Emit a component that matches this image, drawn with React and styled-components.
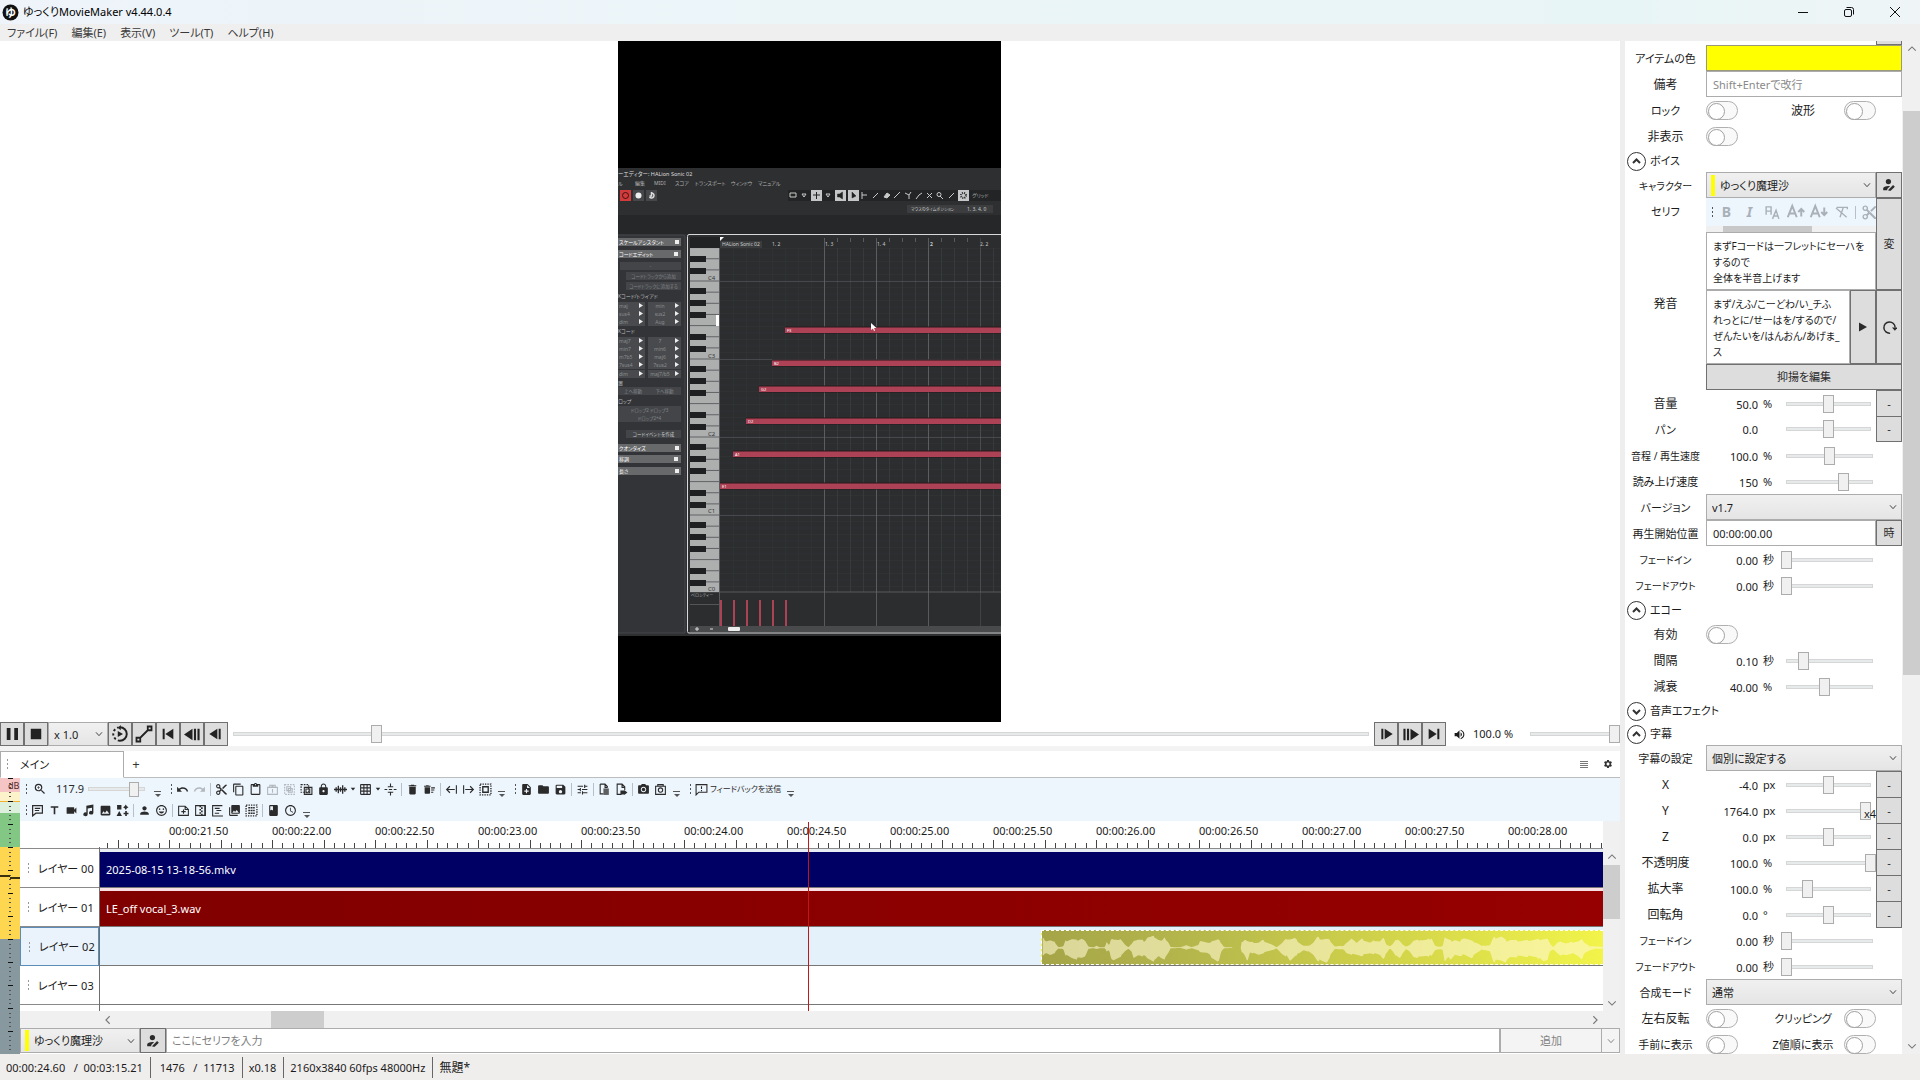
import React, { useState, useId } from 'react';
import styled, { createGlobalStyle } from 'styled-components';
import {
  MdZoomIn, MdUndo, MdRedo, MdContentCut, MdContentCopy, MdContentPaste, MdLock, MdGridOn,
  MdDelete, MdDeleteSweep, MdNoteAdd, MdFolder, MdSave, MdTune, MdPhotoCamera, MdTitle,
  MdVideocam, MdImage, MdPerson, MdInsertEmoticon, MdPhotoLibrary, MdBook, MdAccessTime,
  MdVolumeUp, MdSettings, MdSelectAll,
} from 'react-icons/md';

const FONT = '"Noto Sans", "Noto Sans CJK JP", sans-serif';

const GlobalStyle = createGlobalStyle`
  * { box-sizing: border-box; }
  body {
    margin: 0;
    font-family: ${FONT};
    font-size: 11px;
    line-height: 16px;
    font-feature-settings: "palt";
    color: #1b1b1b;
    background: #f0eeed;
  }
  button, input, select, textarea {
    font-family: inherit;
    font-size: inherit;
    line-height: inherit;
    font-feature-settings: inherit;
    color: inherit;
    margin: 0;
  }
`;

/* ---------- icons ---------- */

const Glyph = ({ size = 13, children }) => (
  <svg width={size} height={size} viewBox="0 0 24 24" fill="currentColor" aria-hidden="true">
    {children}
  </svg>
);

const stroke = { fill: 'none', stroke: 'currentColor', strokeWidth: 2 };

const PauseIcon = () => <Glyph size={18}><path d="M5 4h5v16H5zM15 4h5v16h-5z" /></Glyph>;
const StopIcon = () => <Glyph size={18}><path d="M5 5h14v14H5z" /></Glyph>;
const LoopIcon = () => (
  <Glyph size={18}>
    <path d="M12 3a9 9 0 0 1 0 18" {...stroke} strokeWidth="2.6" />
    <path d="M12 21a9 9 0 0 1-9-9 9 9 0 0 1 7-8.8" {...stroke} strokeWidth="2.6" strokeDasharray="3 3" />
    <path d="M9 8l7 4-7 4zM13 0v7L9 3.500z" />
  </Glyph>
);
const PathIcon = () => (
  <Glyph size={18}>
    <path d="M2 17h5v5H2zM17 2h5v5h-5zM7 17L17 7" {...stroke} strokeWidth="2.4" />
  </Glyph>
);
const FirstIcon = () => <Glyph size={16}><path d="M4 4h3v16H4zM20 4v16L8 12z" /></Glyph>;
const BackManyIcon = () => <Glyph size={17}><path d="M12 4v16L0 12zM14 4h3v16h-3zM19 4h3v16h-3z" /></Glyph>;
const BackIcon = () => <Glyph size={16}><path d="M14 4v16L2 12zM16 4h3v16h-3z" /></Glyph>;
const NextIcon = () => <Glyph size={16}><path d="M10 4v16l12-8zM5 4h3v16H5z" /></Glyph>;
const NextManyIcon = () => <Glyph size={17}><path d="M12 4v16l12-8zM7 4h3v16H7zM2 4h3v16H2z" /></Glyph>;
const LastIcon = () => <Glyph size={16}><path d="M17 4h3v16h-3zM4 4v16l12-8z" /></Glyph>;
const PersonEdit = () => (
  <Glyph size={14}>
    <circle cx="11" cy="6" r="4.500" />
    <path d="M2 21v-3c0-3 4-4.500 9-4.500 1 0 2 .1 3 .3L9 19v2z" />
    <path d="M11 20l8-8 3 3-7 7h-4z" />
  </Glyph>
);
const ChevronDown = () => <Glyph size={8}><path d="M3 7l9 10 9-10" {...stroke} strokeWidth="3" /></Glyph>;
const Arrow = ({ turn = 0 }) => (
  <Glyph size={10}>
    <path d="M3 16l9-9 9 9" {...stroke} strokeWidth="2.600" transform={`rotate(${turn} 12 12)`} />
  </Glyph>
);
const GroupIcon = () => (
  <Glyph>
    <path d="M3 3h18v18H3z" {...stroke} strokeDasharray="3 2" />
    <path d="M7 7h7v7H7zM10 10h7v7h-7z" {...stroke} />
  </Glyph>
);
const UngroupIcon = () => (
  <Glyph>
    <path d="M2 3h14v14H2z" {...stroke} strokeDasharray="3 2" />
    <path d="M8 8h14v13H8zM11 11h7v7h-7z" {...stroke} />
  </Glyph>
);
const PasteAttr = () => <Glyph><path d="M3 8h18v13H3zM7 8V4h4v4M13 8V4h4v4M12 11v7" {...stroke} /></Glyph>;
const WaveIcon = () => <Glyph><path d="M0 12h24M4 8v8M8 5v14M12 8v8M16 4v16M20 8v8" {...stroke} strokeWidth="2.400" /></Glyph>;
const SplitIcon = () => <Glyph><path d="M1 12h5M18 12h5M9 12h6M7 7h10M7 17h10M12 1v5M12 18v5" {...stroke} /></Glyph>;
const ToLeft = () => <Glyph><path d="M21 4v16M18 12H3M9 6l-6 6 6 6" {...stroke} /></Glyph>;
const ToRight = () => <Glyph><path d="M3 4v16M6 12h15M15 6l6 6-6 6" {...stroke} /></Glyph>;
const BoxDots = () => (
  <Glyph>
    <path d="M2 2h20v20H2z" {...stroke} strokeWidth="2.500" strokeDasharray="2.500 2" />
    <path d="M7 7h10v10H7z" {...stroke} strokeWidth="2.500" />
  </Glyph>
);
const GroupDots = () => (
  <Glyph>
    <path d="M2 2h20v20H2z" {...stroke} strokeWidth="2.500" strokeDasharray="2.500 2" />
    <path d="M6 7h12M6 12h12M6 17h12" {...stroke} strokeWidth="3" strokeDasharray="3.500 1" />
  </Glyph>
);
const SerifIcon = () => <Glyph><path d="M3 3h18v14H9l-6 5z M7 8h10M7 12h8" {...stroke} strokeWidth="2.200" /></Glyph>;
const MusicIcon = () => <Glyph><path d="M8 3l13-2v15a4 3.500 0 1 1-2.500-3.200V7l-8 1.200V19A4 3.500 0 1 1 8 15.800z" /></Glyph>;
const ShapesIcon = () => <Glyph><path d="M2 2h8v8H2zM6 13l5 9H1zM14 16h3v-3h3v3h3v3h-3v3h-3v-3h-3zM18 1l2 3 3 2-3 2-2 3-2-3-3-2 3-2z" /></Glyph>;
const EffectIcon = () => <Glyph><path d="M3 4h12l6 6v11H3zM15 4v6h6M12 10v8M8 14h8" {...stroke} /></Glyph>;
const GradIcon = () => (
  <Glyph>
    <path d="M3 3h18v18H3z" {...stroke} />
    <path d="M10 3h3v3h-3zM13 6h3v3h-3zM10 9h3v3h-3zM13 12h3v3h-3zM10 15h3v3h-3zM13 18h3v3h-3zM16 3h5v18h-2V3z" />
  </Glyph>
);
const SceneIcon = () => <Glyph><path d="M3 2v20h19M3 3h18M7 8h9M10 12h9M7 17h8" {...stroke} /></Glyph>;
const FileList = () => <Glyph><path d="M4 2h9l5 5M4 2v18h6M13 2v6h5" {...stroke} /><path d="M10 10h10v12H10z" opacity=".75" /></Glyph>;
const FileOut = () => <Glyph><path d="M12 21H4V2h9l5 5v6M13 2v6h5" {...stroke} /><path d="M10 14h8v7h-8zM17 13l6 4.500-6 4.500z" /></Glyph>;
const CamFile = () => (
  <Glyph>
    <path d="M3 6h18v15H3zM7 6V3h10v3" {...stroke} />
    <circle cx="12" cy="13" r="4" {...stroke} />
  </Glyph>
);
const FeedbackIcon = () => <Glyph><path d="M2 3h20v14H7l-5 5zM12 6v5M12 13v2" {...stroke} /></Glyph>;
const ClearFormat = () => <Glyph size={16}><path d="M4 5h16v3M14 5L9 20M3 6l16 14" {...stroke} /></Glyph>;

/* ---------- window ---------- */

const Window = styled.div`
  display: flex;
  flex-direction: column;
  height: 100vh;
  overflow: hidden;
`;

const TitleBar = styled.header`
  display: flex;
  align-items: center;
  flex: none;
  height: 24px;
  padding-right: 2px;
  padding-left: 2px;
  background: linear-gradient(90deg, #eef4fa, #eaf5f7 60%, #e8f5f6 85%, #eff5f6);
`;

const AppTitle = styled.h1`
  flex: 1;
  margin: 0 0 0 4px;
  font-size: 11px;
  font-weight: 400;
  color: #000;
`;

const WindowButton = styled.button`
  display: grid;
  place-items: center;
  width: 46px;
  height: 20px;
  padding: 0;
  border: 0;
  background: none;
`;

const MenuBar = styled.nav`
  display: flex;
  flex: none;
  gap: 14px;
  height: 17px;
  padding-left: 7px;
  background: #efefef;
`;

const MenuItem = styled.button`
  padding: 0;
  border: 0;
  background: none;
  color: #3a3a3a;
`;

const Workspace = styled.div`
  display: flex;
  flex: 1;
  min-height: 0;
`;

const Main = styled.main`
  display: flex;
  flex-direction: column;
  flex: 1;
  min-width: 0;
  background: #fff;
`;

const Preview = styled.section`
  display: flex;
  flex: 1;
  justify-content: center;
  min-height: 0;
  padding-right: 1px;

  svg { height: 100%; }
`;

const Transport = styled.div`
  display: flex;
  align-items: center;
  flex: none;
  height: 24px;
`;

const TransportButton = styled.button`
  display: grid;
  place-items: center;
  width: 24px;
  height: 24px;
  padding: 0;
  border: 1px solid #707070;
  background: #dddddd;
  color: #222;
`;

const VolumeText = styled.span`
  width: 53px;
  padding-left: 1px;
`;

const Speaker = styled.span`
  display: grid;
  place-items: center;
  width: 26px;
`;

const Range = styled.input.attrs({ type: 'range' })`
  appearance: none;
  flex: ${(p) => (p.$grow ? 1 : 'none')};
  width: ${(p) => (p.$grow ? 'auto' : `${p.$width}px`)};
  min-width: 0;
  height: 18px;
  background:
    linear-gradient(#e7eaea, #e7eaea) center / calc(100% - 12px) 2px no-repeat,
    linear-gradient(#d6d6d6, #d6d6d6) center / calc(100% - 10px) 4px no-repeat;

  &::-webkit-slider-thumb {
    appearance: none;
    width: ${(p) => (p.$slim ? 10 : 11)}px;
    height: ${(p) => (p.$slim ? 15 : 18)}px;
    border: 1px solid #acacac;
    background: #f0f0f0;
  }
`;

const HSplit = styled.div`
  flex: none;
  height: 5px;
  background: #f3f3f3;
`;

const VSplit = styled.div`
  flex: none;
  width: 5px;
  background: #eeeeee;
`;

/* ---------- select ---------- */

const SelectBox = styled.div`
  display: grid;
  align-items: center;
  width: ${(p) => (p.$width ? `${p.$width}px` : 'auto')};
  height: 100%;

  > * { grid-area: 1 / 1; }
  > svg { justify-self: end; margin-right: 5px; pointer-events: none; color: #444; }
`;

const NativeSelect = styled.select`
  appearance: none;
  width: 100%;
  height: 100%;
  padding: 1px 16px 0 ${(p) => (p.$marked ? 13 : 5)}px;
  border: 1px solid #acacac;
  border-radius: 0;
  background: linear-gradient(#f0f0f0, #e5e5e5);
`;

const Marker = styled.span`
  width: 4px;
  height: 21px;
  margin-left: 5px;
  background: #ffff00;
  pointer-events: none;
`;

function Select({ value, width, marked, id, label }) {
  return (
    <SelectBox $width={width}>
      <NativeSelect id={id} aria-label={label} $marked={marked} defaultValue={value}>
        <option>{value}</option>
      </NativeSelect>
      {marked && <Marker />}
      <ChevronDown />
    </SelectBox>
  );
}

/* ---------- timeline ---------- */

const TabBar = styled.div`
  display: flex;
  align-items: stretch;
  flex: none;
  height: 27px;
  border-bottom: 1px solid #bdbdbd;
`;

const Tab = styled.button`
  display: flex;
  align-items: center;
  gap: 10px;
  width: 124px;
  height: 27px;
  padding: 0 0 0 4px;
  border: 1px solid #acacac;
  border-bottom-color: #fff;
  background: #fff;
  font-size: 11px;
`;

const TabIcon = styled.button`
  display: grid;
  place-items: center;
  width: 24px;
  padding: 0;
  border: 0;
  background: none;
  font-size: 13px;
  color: #333;
`;

const Spacer = styled.div`
  flex: 1;
`;

const TimelineArea = styled.section`
  display: flex;
  flex: none;
`;

const TimelinePane = styled.div`
  flex: 1;
  min-width: 0;
`;

const Toolbars = styled.div`
  height: 43px;
  background: #edf5fd;
`;

const Toolbar = styled.div`
  display: flex;
  align-items: center;
  height: ${(p) => p.$height || 22}px;
  padding-left: 4px;
  color: #2b2b2b;
`;

const Tool = styled.button`
  display: grid;
  place-items: center;
  flex: none;
  width: ${(p) => p.$width || 17}px;
  height: 18px;
  padding: 0;
  border: 0;
  background: none;
  opacity: ${(p) => (p.disabled ? 0.3 : 1)};
`;

const FeedbackButton = styled.button`
  display: flex;
  align-items: center;
  gap: 2px;
  padding: 0 2px;
  border: 0;
  background: none;
  font-size: 8px;
`;

const Grip = styled.span`
  flex: none;
  width: 5px;
  height: 11px;
  background:
    linear-gradient(${(p) => (p.$faint ? '#999, #999' : '#555, #555')}) 2px 0 / 1px 2px no-repeat,
    linear-gradient(${(p) => (p.$faint ? '#999, #999' : '#555, #555')}) 2px 4px / 1px 2px no-repeat,
    linear-gradient(${(p) => (p.$faint ? '#999, #999' : '#555, #555')}) 2px 8px / 1px 2px no-repeat;
`;

const Divider = styled.span`
  flex: none;
  width: 1px;
  height: 13px;
  margin: 0 2px;
  background: #b9bfc6;
`;

const Overflow = styled.span`
  align-self: flex-end;
  flex: none;
  width: 7px;
  height: 7px;
  margin: 0 8px 2px 4px;
  border-top: 1px solid #555;

  &::after {
    content: '';
    display: block;
    margin: 2px 0 0 1px;
    width: 0;
    border: 3px solid transparent;
    border-top-color: #555;
    border-bottom: 0;
  }
`;

const ZoomValue = styled.span`
  width: 32px;
  padding-left: 5px;
`;

const Timeline = styled.div`
  display: grid;
  grid-template-columns: 80px 1fr 17px;
`;

const Heads = styled.div`
  padding-top: 27px;
  border-right: 1px solid #6f6f6f;
  border-image: linear-gradient(transparent 27px, #6f6f6f 27px) 1;
`;

const LayerHead = styled.div`
  display: flex;
  align-items: center;
  gap: 7px;
  height: 39px;
  padding-top: 1px;
  padding-left: 6px;
  border: ${(p) => (p.$active ? '1px solid #5b8db8' : '0')};
  border-bottom: 1px solid ${(p) => (p.$active ? '#5b8db8' : '#8a8a8a')};
  background: ${(p) => (p.$active ? '#eaf3fb' : '#fff')};

  &:first-child { border-top: 1px solid #8a8a8a; height: 40px; }
`;

const Tracks = styled.div`
  position: relative;
  min-width: 0;
  overflow: hidden;
`;

const Ruler = styled.div`
  height: 28px;
  border-bottom: 1px solid #8a8a8a;
`;

const RulerLabels = styled.div`
  display: flex;
  height: 19px;
  padding: 2px 0 0 69px;
`;

const RulerLabel = styled.span`
  flex: none;
  width: 103px;
`;

const Ticks = styled.svg`
  display: block;
  width: 100%;
  height: 8px;
`;

const Track = styled.div`
  display: flex;
  height: 39px;
  padding-top: 3px;
  border-bottom: 1px solid #777;
  background: ${(p) => (p.$active ? '#e4f1fb' : p.$tint || '#fff')};
`;

const TrackEnd = styled.div`
  height: 6px;
`;

const Clip = styled.div`
  display: flex;
  align-items: center;
  flex: 1;
  min-width: 0;
  padding-left: 6px;
  color: #fff;
  background: ${(p) => p.$fill};
`;

const VoiceClip = styled.div`
  flex: 1;
  min-width: 0;
  margin-left: 941px;
  border: 1px dashed #fff;
  border-right: 0;
  background: linear-gradient(90deg, #a5a548, #b7b94c 30%, #d0d24a 60%, #f2f44a);
  overflow: hidden;

  svg { display: block; }
`;

const Playhead = styled.div`
  position: absolute;
  top: 1px;
  bottom: 0;
  left: 708px;
  width: 1px;
  background: #c01818;
`;

const VScroll = styled.div`
  display: flex;
  flex-direction: column;
  align-items: center;
  width: 17px;
  padding: ${(p) => p.$pad || '3px 0'};
  background: #f0f0f0;
  color: #777;
`;

const VThumb = styled.div`
  width: 17px;
  height: ${(p) => p.$size};
  margin-top: ${(p) => p.$top}px;
  background: #cdcdcd;
`;

const HScroll = styled.div`
  display: flex;
  align-items: center;
  height: 17px;
  padding: 0 20px 0 83px;
  background: #f0f0f0;
  color: #777;
`;

const HThumb = styled.div`
  width: 53px;
  height: 17px;
  margin-left: 158px;
  background: #cdcdcd;
`;

const SerifBar = styled.form`
  display: flex;
  height: 25px;
`;

const SerifInput = styled.input`
  flex: 1;
  min-width: 0;
  padding: 1px 5px 0;
  border: 1px solid #acacac;
  background: #fff;

  &::placeholder { color: #808080; }
`;

const AddButton = styled.button`
  width: ${(p) => p.$width}px;
  padding: 0;
  border: 1px solid #acacac;
  border-left-width: ${(p) => (p.$joined ? 0 : 1)}px;
  background: #f4f4f4;
  color: #838383;
`;

const StatusBar = styled.footer`
  display: flex;
  align-items: center;
  flex: none;
  height: 26px;
  padding-left: 6px;
`;

const StatusItem = styled.span`
  padding: 0 7px 0 6px;
  line-height: 21px;
  white-space: pre;
  border-right: ${(p) => (p.$last ? 0 : '1px solid #666')};
  font-size: ${(p) => (p.$last ? 12 : 11)}px;

  &:first-child { padding-left: 0; }
`;

/* ---------- property panel ---------- */

const Side = styled.aside`
  display: flex;
  flex: none;
  width: 295px;
  background: #f0f0f0;
`;

const Props = styled.div`
  flex: 1;
  margin-right: 1px;
  background: #fff;
  overflow: hidden;
`;

const CutButton = styled.div`
  width: 26px;
  height: 4px;
  margin-left: auto;
  border: 1px solid #707070;
  border-top: 0;
  background: #ddd;
`;

const PropRow = styled.div`
  display: grid;
  grid-template-columns: 81px 1fr;
  height: ${(p) => p.$height || 26}px;
`;

const PropLabel = styled.label`
  padding-top: 6px;
  text-align: center;
  white-space: nowrap;
  font-size: ${(p) => p.$size || 12}px;
`;

const PropBody = styled.div`
  display: flex;
  min-width: 0;
  align-items: ${(p) => (p.$center ? 'center' : 'stretch')};
`;

const Swatch = styled.button`
  flex: 1;
  border: 1px solid #9a9a7a;
  background: #ffff00;
`;

const TextField = styled.input`
  flex: 1;
  min-width: 0;
  padding: 1px 6px 0;
  border: 1px solid #acacac;
  background: #fff;

  &::placeholder { color: #8a8a8a; }
`;

const TextArea = styled.textarea`
  flex: 1;
  min-width: 0;
  width: 100%;
  padding: 5px 0 0 6px;
  border: 1px solid #acacac;
  border-radius: 0;
  background: #fff;
  font-size: 10px;
  line-height: 16px;
  white-space: pre;
  resize: none;
  overflow: hidden;
`;

const SideButton = styled.button`
  display: grid;
  place-items: center;
  flex: ${(p) => (p.$wide ? 1 : 'none')};
  width: 26px;
  padding: 0;
  border: 1px solid #707070;
  background: #dddddd;
  color: #2b2b2b;
`;

const Toggle = styled.input.attrs({ type: 'checkbox' })`
  appearance: none;
  display: block;
  flex: none;
  width: 32px;
  height: 19px;
  padding: 1px;
  border: 1px solid #b0b0b0;
  border-radius: 10px;
  background: #f9f9f9;

  &::before {
    content: '';
    display: block;
    width: 15px;
    height: 15px;
    border: 1px solid #a0a0a0;
    border-radius: 50%;
    background: #fff;
  }
  &:checked { background: #cfe4f7; padding-left: 14px; }
`;

const SecondLabel = styled.label`
  flex: 1;
  padding: 2px 6px 0 30px;
  text-align: center;
  font-size: ${(p) => p.$size || 12}px;
  white-space: nowrap;
`;

const EndPad = styled.span`
  width: 26px;
`;

const NumberField = styled.input`
  width: 52px;
  height: 100%;
  padding: 1px 0 0;
  border: 0;
  background: none;
  text-align: right;
`;

const Unit = styled.span`
  width: 23px;
  padding: 1px 0 0 5px;
  line-height: 26px;
`;

const Multiplier = styled.span`
  position: absolute;
  right: 0;
  bottom: 4px;
  line-height: 12px;
  pointer-events: none;
`;

const RangeBox = styled.div`
  display: flex;
  align-items: center;
  position: relative;
`;

const Expander = styled.button`
  display: flex;
  align-items: center;
  gap: 4px;
  width: 100%;
  height: 23px;
  padding: 1px 0 0 2px;
  border: 0;
  background: none;
`;

const ScriptColumn = styled.div`
  display: flex;
  flex-direction: column;
  flex: 1;
  min-width: 0;
`;

const FormatBar = styled.div`
  display: flex;
  align-items: center;
  flex: none;
  height: 28px;
  padding-left: 4px;
  background: #edf5fd;
  color: #a9b0b8;
  overflow: hidden;
`;

const FormatButton = styled.button`
  flex: none;
  width: 23px;
  height: 20px;
  padding: 0;
  border: 0;
  background: none;
  font-size: 14px;
  line-height: 18px;
  font-weight: 700;
  font-style: ${(p) => (p.$italic ? 'italic' : 'normal')};

  svg { display: block; margin: 0 auto; }
`;

const FormatScroll = styled.div`
  flex: none;
  height: 6px;
  padding-left: 17px;
  background: #f0f0f0;

  &::after {
    content: '';
    display: block;
    width: 89px;
    height: 6px;
    background: #c8c8c8;
  }
`;

function ExpanderRow({ title, open }) {
  return (
    <Expander aria-expanded={!!open}>
      <svg width="19" height="19" viewBox="0 0 19 19" fill="none" stroke="#333">
        <circle cx="9.5" cy="9.5" r="9" />
        <path d={open ? 'M6 11l3.500-3.500L13 11' : 'M6 8l3.500 3.500L13 8'} strokeWidth="2" />
      </svg>
      {title}
    </Expander>
  );
}

function ValueRow({ label, size, value, unit, pos, button, mult }) {
  const id = useId();
  const [current, setCurrent] = useState(pos);
  return (
    <PropRow>
      <PropLabel htmlFor={id} $size={size}>{label}</PropLabel>
      <PropBody>
        <NumberField id={id} defaultValue={value} />
        <Unit>{unit}</Unit>
        <RangeBox>
          <Range
            aria-label={label}
            $width={button ? 95 : 97}
            value={current}
            onChange={(e) => setCurrent(e.target.value)}
          />
          {mult && <Multiplier>{mult}</Multiplier>}
        </RangeBox>
        {button && <SideButton>-</SideButton>}
      </PropBody>
    </PropRow>
  );
}

function ToggleRow({ label, second, size, secondSize }) {
  const id = useId();
  return (
    <PropRow>
      <PropLabel htmlFor={id} $size={size}>{label}</PropLabel>
      <PropBody $center>
        <Toggle id={id} />
        {second && (
          <>
            <SecondLabel htmlFor={`${id}-b`} $size={secondSize}>{second}</SecondLabel>
            <Toggle id={`${id}-b`} />
            <EndPad />
          </>
        )}
      </PropBody>
    </PropRow>
  );
}

function SelectRow({ label, size, value }) {
  const id = useId();
  return (
    <PropRow>
      <PropLabel htmlFor={id} $size={size}>{label}</PropLabel>
      <Select id={id} value={value} />
    </PropRow>
  );
}

/* ---------- preview picture ---------- */

const OCTAVES = [162, 240, 318, 396, 474];
const BLACK_KEYS = [10, 22, 34, 56, 68];
const NOTES = [
  [167, 289, 'F3'], [154, 322, 'B2'], [141, 348, 'G2'], [128, 380, 'D2'], [115, 413, 'A1'], [102, 445, 'E1'],
];
const CHORDS = [
  [262, 'maj', 'min'], [270, 'sus4', 'sus2'], [278, 'dim', 'Aug'],
  [297, 'maj7', '7'], [305, 'min7', 'min6'], [313, 'm7b5', 'maj6'], [321, '7sus4', '7sus2'], [330, 'dim', 'maj7/b5'],
];
const HEADERS = [
  [197, 'スケールアシスタント'], [209, 'コードエディット'], [403, 'クオンタイズ'], [414, '移調'], [426, '長さ'],
];
const SMALL_BUTTONS = [
  [2, 221, 61, '-'], [8, 231, 55, 'コードトラックから追加'], [8, 241, 55, 'コードトラックに追加する'],
  [0, 346, 30, '上へ移動'], [30, 346, 33, '下へ移動'], [0, 365, 63, 'ドロップ2    ドロップ3'], [0, 373, 63, 'ドロップ2+4'],
  [8, 389, 55, 'コードイベントを作成'],
];

function EditorPicture() {
  return (
    <svg viewBox="0 0 383 681" fontSize="5" fontFamily={FONT} role="img" aria-label="プレビュー">
      <defs>
        <clipPath id="keys"><path d="M72 207h29v344H72z" /></clipPath>
      </defs>
      <rect width="383" height="681" fill="#000" />
      <rect y="127" width="383" height="468" fill="#2d2f31" />
      <rect y="174" width="383" height="19" fill="#252728" />
      <text x="0" y="135" fill="#ddd" fontSize="5.500">ーエディター: HALion Sonic 02</text>
      <g fill="#b4b4b4">
        {[[0, 'ル'], [17, '編集'], [36, 'MIDI'], [57, 'スコア'], [77, 'トランスポート'], [113, 'ウィンドウ'], [140, 'マニュアル']].map(
          ([x, t]) => <text key={t} x={x} y="144">{t}</text>
        )}
      </g>
      <rect x="2" y="149" width="11" height="11" fill="#d23b3b" />
      <circle cx="7.5" cy="154.500" r="3" fill="none" stroke="#401010" />
      <rect x="15" y="149" width="11" height="11" fill="#45474a" />
      <circle cx="20.5" cy="154.500" r="3" fill="#eee" />
      <rect x="28" y="149" width="11" height="11" fill="#45474a" />
      <path d="M33.500 152a2.500 2.500 0 1 1-2 4M33.500 151v4h-2" fill="none" stroke="#ddd" strokeWidth="1.500" />
      <rect x="170" y="149" width="213" height="11" fill="#222425" />
      {[193, 217, 230, 340].map((x) => <rect key={x} x={x} y="149" width="11" height="11" fill="#c4c6c8" />)}
      <g stroke="#222" fill="#222">
        <path d="M195 154h7M198.500 151v7" />
        <path d="M219.500 153h2l3-2v7l-3-2h-2zM234 151v6l4-2z" strokeWidth=".5" />
        <circle cx="345.500" cy="154.500" r="2.500" fill="none" strokeDasharray="1 1" strokeWidth="2" />
      </g>
      <g stroke="#c8c8c8" fill="none">
        <path d="M172 152h6v4h-6zM244 151v7M244 154h5M255 157l5-5M276 157l6-6M287 152l4 2 2-3M291 154v4M298 158l3-4 3-2M309 152l5 5M314 152l-5 5M331 157l5-5" />
        <path d="M266 156l3-4 3 2-3 3z" fill="#c8c8c8" />
        <circle cx="321" cy="153.500" r="2" />
        <path d="M322 155l3 3M184 153h4l-2 3zM208 153h4l-2 3z" />
      </g>
      <text x="354" y="156" fill="#aaa">グリッド</text>
      <rect x="289" y="164" width="86" height="8" fill="#3b3d3f" />
      <text x="293" y="170" fill="#ccc" fontSize="4">マウスのタイムポジション</text>
      <text x="349" y="170" fill="#ccc">1. 3. 4.  0</text>

      <path d="M0 194h65q2 0 2 2v396H0" fill="#323438" stroke="#45474a" />
      {HEADERS.map(([y, t], i) => (
        <g key={t}>
          <rect x="0" y={y} width="63" height="8" fill="#68696b" />
          <text x="1" y={y + 6} fill="#fff">{t}</text>
          <rect x={57 - (i % 2)} y={y + 2} width="4" height="4" fill="#eee" />
        </g>
      ))}
      {SMALL_BUTTONS.map(([x, y, w, t]) => (
        <g key={t}>
          <rect x={x} y={y} width={w} height="8" fill="#434549" />
          <text x={x + w / 2} y={y + 6} fill={y === 389 ? '#ccc' : '#858789'} fontSize="4.500" textAnchor="middle">{t}</text>
        </g>
      ))}
      <text x="0" y="257" fill="#bbb">Kコード/トライアド</text>
      <text x="0" y="292" fill="#bbb">Kコード</text>
      <text x="0" y="344" fill="#bbb">置</text>
      <text x="0" y="362" fill="#bbb">ロップ</text>
      {CHORDS.map(([y, a, b]) => (
        <g key={y} fill="#8b8d8f">
          <path d={`M0 ${y - 1}h27v8H0zM30 ${y - 1}h33v8H30z`} fill="#484a4d" />
          <text x="1" y={y + 5}>{a}</text>
          <text x="42" y={y + 5} textAnchor="middle">{b}</text>
          <path d={`M21 ${y}l4 2.500-4 2.500zM57 ${y}l4 2.500-4 2.500z`} fill="#eee" />
        </g>
      ))}

      <rect x="72" y="196" width="311" height="395" fill="#2b2d2f" />
      <path d="M72 196h30v11H72z" fill="#202224" />
      <rect x="102" y="200" width="42" height="7" fill="#3a3c3e" />
      <path d="M102 196h4l-4 4z" fill="#fff" />
      <g fill="#ccc">
        <text x="104" y="205">HALion Sonic 02</text>
        <text x="154" y="205">1. 2</text>
        <text x="207" y="205">1. 3</text>
        <text x="259" y="205">1. 4</text>
        <text x="312" y="205" fontWeight="700">2</text>
        <text x="362" y="205">2. 2</text>
      </g>
      <g stroke="#343638">
        {Array.from({ length: 53 }, (_, i) => <path key={i} d={`M102 ${207.5 + i * 6.5}h281`} strokeWidth=".5" />)}
      </g>
      <g stroke="#3b3d3f" strokeWidth=".8">
        {Array.from({ length: 21 }, (_, i) => <path key={i} d={`M${115.5 + i * 13} 207v344`} opacity={i < 7 ? 0.4 : 1} />)}
      </g>
      <g stroke="#646668" strokeWidth=".8">
        {[206.5, 258.5, 310.5, 362.5].map((x) => <path key={x} d={`M${x} 197v388`} opacity={x > 362 ? 0.5 : 1} />)}
        {[219.5, 232.5, 245.5, 271.5, 284.5, 297.5, 323.5, 336.5, 349.5].map((x) => <path key={x} d={`M${x} 197v4`} />)}
        {OCTAVES.slice(1).map((y) => <path key={y} d={`M102 ${y + 0.5}h281`} opacity=".6" />)}
        <path d="M72 551h311M101.500 207v378" />
      </g>
      <g clipPath="url(#keys)">
        <rect x="72" y="207" width="29" height="344" fill="#adafaf" />
        {OCTAVES.map((y) => (
          <g key={y}>
            {[0, 1, 2, 3, 4, 5, 6].map((k) => <path key={k} d={`M72 ${y + k * 11.15}h29`} stroke="#4c4e50" strokeWidth=".8" />)}
            {BLACK_KEYS.map((k) => <rect key={k} x="72" y={y + k - 3} width="16" height="6" fill="#1e2022" />)}
          </g>
        ))}
      </g>
      <rect x="98" y="274" width="3" height="11" fill="#fff" />
      <g fill="#333" fontSize="6">
        <text x="90" y="239">C4</text>
        <text x="90" y="317">C3</text>
        <text x="90" y="395">C2</text>
        <text x="90" y="472">C1</text>
        <text x="90" y="550">C0</text>
      </g>
      {NOTES.map(([x, y, n]) => (
        <g key={n}>
          <rect x={x} y={y - 3.500} width={383 - x} height="7" fill="#26181b" />
          <rect x={x} y={y - 2.500} width={383 - x} height="5.500" fill="#ad4256" />
          <text x={x + 2} y={y + 2} fill="#fff" fontSize="4">{n}</text>
        </g>
      ))}
      <text x="73" y="556" fill="#bbb" fontSize="4">ベロシティー</text>
      <path d="M72 563.500h29" stroke="#555" />
      {[102, 115, 128, 141, 154, 167].map((x) => <rect key={x} x={x} y="559" width="2" height="26" fill="#ad4256" />)}
      <rect x="72" y="585" width="311" height="6" fill="#484a4c" />
      <rect x="110" y="586" width="12" height="4" rx="1" fill="#eee" />
      <path d="M77 588h4M79 586v4M92 588h3" stroke="#ddd" />
      <path d="M383 193.500H71q-1.500 0-1.500 2v395q0 1.500 1.500 1.500h312" fill="none" stroke="#d8d8d8" />
      <path d="M253 282v7l2-1.500 1 2.500 1-.5-1-2.500h2.500z" fill="#fff" />
    </svg>
  );
}

/* ---------- level meter ---------- */

const METER_BANDS = [
  [0, 14, '#f5c4c4'], [14, 9, '#fdf3cb'], [23, 1, '#f0b030'], [24, 11, '#ddf0dd'],
  [35, 34, '#83c785'], [69, 92, '#ffd650'], [161, 115, '#87999f'],
];

function LevelMeter() {
  return (
    <svg width="20" height="276" viewBox="0 0 20 276">
      {METER_BANDS.map(([y, h, c]) => <rect key={y} y={y} width="20" height={h} fill={c} />)}
      {Array.from({ length: 60 }, (_, i) => (
        <rect
          key={i}
          x={i % 5 ? 9 : 8}
          y={Math.round(i * 4.6)}
          width={i % 5 ? 2 : 5}
          height="1"
          fill={i % 5 ? '#555' : '#111'}
        />
      ))}
      <path d="M0 98h10M10 100h10" stroke="#3a3010" strokeWidth="2" />
      <text x="8" y="11" fontSize="9" fontFamily={FONT} fill="#4a2a2a">dB</text>
    </svg>
  );
}

// envelope of the voice: [x, top, bottom], drawn around y = 72
const WAVE = [
  [8, 42, 96], [20, 50, 92], [30, 48, 96], [45, 55, 88], [55, 70, 75], [70, 68, 76], [76, 50, 96], [95, 44, 106],
  [110, 48, 108], [125, 42, 106], [135, 50, 100], [145, 68, 76], [160, 71, 74], [170, 66, 76], [180, 71, 74],
  [195, 70, 74], [200, 54, 84], [208, 66, 78], [213, 40, 112], [220, 44, 116], [235, 48, 104], [245, 46, 98],
  [255, 62, 84], [265, 71, 75], [275, 60, 84], [280, 48, 110], [295, 46, 96], [315, 50, 100], [322, 38, 108],
  [345, 36, 116], [355, 46, 100], [365, 50, 106], [375, 40, 108], [385, 54, 90], [392, 70, 74], [420, 71, 73],
  [440, 64, 78], [455, 70, 74], [475, 64, 80], [480, 48, 88], [505, 58, 88], [515, 50, 108], [535, 46, 116],
  [545, 58, 84], [552, 70, 74], [576, 71, 73], [577, 72, 72], [602, 72, 72], [604, 56, 84], [615, 44, 100],
  [622, 50, 118], [630, 54, 86], [655, 56, 96], [668, 48, 90], [695, 62, 80], [710, 70, 75], [725, 58, 92],
  [740, 42, 100], [750, 44, 118], [765, 42, 98], [780, 58, 90], [790, 66, 80], [805, 66, 84], [820, 56, 96],
  [832, 38, 112], [845, 44, 118], [860, 44, 120], [870, 48, 100], [878, 60, 86], [885, 68, 76], [910, 66, 78],
  [920, 56, 90], [938, 42, 94], [950, 56, 96], [965, 44, 98], [990, 56, 90], [1005, 48, 92], [1020, 52, 96],
  [1030, 40, 108], [1040, 62, 90], [1050, 68, 74], [1060, 58, 86], [1072, 42, 104], [1080, 50, 108], [1088, 62, 90],
  [1098, 69, 76], [1110, 62, 86], [1120, 50, 102], [1140, 46, 104], [1158, 48, 98], [1175, 40, 100], [1185, 66, 80],
  [1198, 70, 76], [1208, 66, 80], [1214, 38, 118], [1225, 46, 100], [1235, 50, 112], [1245, 46, 96], [1260, 54, 98],
  [1270, 38, 96], [1295, 50, 104], [1310, 56, 90], [1325, 66, 78], [1350, 64, 84], [1360, 40, 116], [1385, 36, 114],
  [1400, 50, 118], [1410, 46, 104], [1440, 50, 100], [1490, 46, 102], [1510, 44, 118], [1523, 44, 110],
  [1528, 56, 86], [1540, 70, 78], [1552, 56, 90], [1565, 52, 98], [1580, 58, 96], [1595, 54, 90], [1615, 52, 100],
  [1625, 46, 108], [1635, 56, 90], [1650, 68, 80], [1665, 68, 76], [1689, 69, 75],
];

function sampleWave() {
  const points = [];
  let seg = 0;
  for (let x = 8; x <= 1689; x += 3) {
    while (seg < WAVE.length - 2 && WAVE[seg + 1][0] < x) seg += 1;
    const [x0, t0, b0] = WAVE[seg];
    const [x1, t1, b1] = WAVE[seg + 1];
    const k = (x - x0) / (x1 - x0);
    const jitter = 1 - ((x * 7) % 11) / 55;
    points.push([x, 72 - (72 - t0 - (t1 - t0) * k) * jitter, 72 + (b0 + (b1 - b0) * k - 72) * jitter]);
  }
  return points;
}

function VoiceWave() {
  const points = sampleWave();
  const top = points.map(([x, t]) => `${x},${t.toFixed(1)}`);
  const bottom = points.map(([x, , b]) => `${x},${b.toFixed(1)}`).reverse();
  return (
    <svg width="561" height="33" viewBox="6 22 1683 99" aria-hidden="true">
      <polygon points={[...top, ...bottom].join(' ')} fill="#fff9d0" opacity=".6" />
    </svg>
  );
}

const TIMES = [
  '00:00:21.50', '00:00:22.00', '00:00:22.50', '00:00:23.00', '00:00:23.50', '00:00:24.00', '00:00:24.50',
  '00:00:25.00', '00:00:25.50', '00:00:26.00', '00:00:26.50', '00:00:27.00', '00:00:27.50', '00:00:28.00',
];

const LAYERS = ['レイヤー 00', 'レイヤー 01', 'レイヤー 02', 'レイヤー 03'];

function RulerTicks() {
  return (
    <Ticks>
      {Array.from({ length: 146 }, (_, i) => {
        const long = (i - 1) % 5 === 0;
        return <rect key={i} x={Math.round(69 + (i - 6) * 10.3)} y={long ? 0 : 3} width="1" height={long ? 8 : 5} fill="#444" />;
      })}
    </Ticks>
  );
}

const icon = (Icon, label, extra) => (
  <Tool key={label} title={label} aria-label={label} {...extra}><Icon size={13} /></Tool>
);

const caret = (label) => (
  <Tool $width={8} aria-label={label}><Glyph size={6}><path d="M3 7h18L12 18z" /></Glyph></Tool>
);

function TimelineTools() {
  return (
    <Toolbars>
      <Toolbar>
        <Grip />
        <Tool $width={22} aria-label="拡大"><MdZoomIn size={14} /></Tool>
        <ZoomValue>117.9</ZoomValue>
        <Range aria-label="ズーム" $width={67} $slim defaultValue={80} />
        <Overflow />
        <Grip />
        {icon(MdUndo, '元に戻す')}
        {icon(MdRedo, 'やり直し', { disabled: true })}
        <Divider />
        {icon(MdContentCut, '切り取り')}
        {icon(MdContentCopy, 'コピー')}
        {icon(MdContentPaste, '貼り付け')}
        {icon(PasteAttr, '属性を貼り付け', { disabled: true })}
        {icon(GroupIcon, 'グループ化', { disabled: true })}
        {icon(UngroupIcon, 'グループ解除')}
        {icon(MdLock, 'ロック')}
        {icon(WaveIcon, '波形')}
        {caret('波形の設定')}
        {icon(MdGridOn, 'グリッド')}
        {caret('グリッドの設定')}
        {icon(SplitIcon, '分割')}
        <Divider />
        {icon(MdDelete, '削除')}
        {icon(MdDeleteSweep, '詰めて削除')}
        <Divider />
        {icon(ToLeft, '左に詰める')}
        {icon(ToRight, '右に詰める')}
        {icon(BoxDots, 'すべて選択')}
        <Overflow />
        <Grip />
        {icon(MdNoteAdd, '新規')}
        {icon(MdFolder, '開く')}
        {icon(MdSave, '保存')}
        <Divider />
        {icon(MdTune, '設定')}
        <Divider />
        {icon(FileList, 'テンプレート')}
        {icon(FileOut, '出力')}
        <Divider />
        {icon(MdPhotoCamera, '撮影')}
        {icon(CamFile, 'クリップボードへ撮影')}
        <Overflow />
        <Grip />
        <FeedbackButton><FeedbackIcon />フィードバックを送信</FeedbackButton>
        <Overflow />
      </Toolbar>
      <Toolbar $height={21}>
        <Grip />
        {icon(SerifIcon, 'ボイス')}
        {icon(MdTitle, 'テキスト')}
        {icon(MdVideocam, '動画')}
        {icon(MusicIcon, '音声')}
        {icon(MdImage, '画像')}
        {icon(ShapesIcon, '図形')}
        <Divider />
        {icon(MdPerson, '立ち絵')}
        {icon(MdInsertEmoticon, '表情')}
        <Divider />
        {icon(EffectIcon, 'エフェクト')}
        {icon(GradIcon, '場面切り替え')}
        {icon(SceneIcon, 'シーン')}
        {icon(MdPhotoLibrary, '画面の複製')}
        {icon(GroupDots, 'グループ制御')}
        <Divider />
        {icon(MdBook, 'テンプレート')}
        {icon(MdAccessTime, '履歴')}
        <Overflow />
      </Toolbar>
    </Toolbars>
  );
}

function TimelinePanel() {
  return (
    <TimelineArea>
      <LevelMeter />
      <TimelinePane>
        <TimelineTools />
        <Timeline>
          <Heads>
            {LAYERS.map((name, i) => (
              <LayerHead key={name} $active={i === 2}><Grip $faint />{name}</LayerHead>
            ))}
          </Heads>
          <Tracks>
            <Ruler>
              <RulerLabels>{TIMES.map((t) => <RulerLabel key={t}>{t}</RulerLabel>)}</RulerLabels>
              <RulerTicks />
            </Ruler>
            <Track $tint="#e9eef5"><Clip $fill="#000064">2025-08-15 13-18-56.mkv</Clip></Track>
            <Track $tint="#f8dfe4"><Clip $fill="linear-gradient(90deg, #800000, #960000)">LE_off vocal_3.wav</Clip></Track>
            <Track $active><VoiceClip><VoiceWave /></VoiceClip></Track>
            <Track />
            <Playhead />
            <TrackEnd />
          </Tracks>
          <VScroll $pad="31px 0 3px">
            <Arrow />
            <VThumb $top={3} $size="54px" />
            <Spacer />
            <Arrow turn={180} />
          </VScroll>
        </Timeline>
        <HScroll>
          <Arrow turn={-90} />
          <HThumb />
          <Spacer />
          <Arrow turn={90} />
        </HScroll>
        <SerifBar onSubmit={(e) => e.preventDefault()}>
          <Select value="ゆっくり魔理沙" width={120} marked label="キャラクター" />
          <SideButton type="button" aria-label="キャラクターの編集"><PersonEdit /></SideButton>
          <SerifInput placeholder="ここにセリフを入力" aria-label="セリフ" />
          <AddButton $width={102}>追加</AddButton>
          <AddButton $width={18} $joined type="button" aria-label="追加の種類"><ChevronDown /></AddButton>
        </SerifBar>
      </TimelinePane>
    </TimelineArea>
  );
}

function PropertyPanel() {
  return (
    <Side>
      <Props>
        <CutButton />
        <PropRow>
          <PropLabel as="span" $size={11}>アイテムの色</PropLabel>
          <PropBody><Swatch aria-label="アイテムの色" /></PropBody>
        </PropRow>
        <PropRow>
          <PropLabel htmlFor="memo">備考</PropLabel>
          <PropBody><TextField id="memo" placeholder="Shift+Enterで改行" /></PropBody>
        </PropRow>
        <ToggleRow label="ロック" size={11} second="波形" />
        <ToggleRow label="非表示" />
        <ExpanderRow title="ボイス" open />
        <PropRow>
          <PropLabel htmlFor="character" $size={10}>キャラクター</PropLabel>
          <PropBody>
            <Select id="character" value="ゆっくり魔理沙" width={170} marked />
            <SideButton aria-label="キャラクターの編集"><PersonEdit /></SideButton>
          </PropBody>
        </PropRow>
        <PropRow $height={92}>
          <PropLabel htmlFor="script" $size={11}>セリフ</PropLabel>
          <PropBody>
            <ScriptColumn>
              <FormatBar>
                <Grip />
                <FormatButton aria-label="太字">B</FormatButton>
                <FormatButton $italic aria-label="斜体">I</FormatButton>
                <FormatButton aria-label="フォント">
                  <Glyph size={17}><path d="M3 15V4h7v11M3 10h7M12 21l5-12 4 12M14 17h6" {...stroke} /></Glyph>
                </FormatButton>
                <FormatButton aria-label="文字を大きく">
                  <Glyph size={18}><path d="M1 19L7 4l6 15M3 14h8M19 18V8M15 12l4-4 4 4" {...stroke} strokeWidth="2.600" /></Glyph>
                </FormatButton>
                <FormatButton aria-label="文字を小さく">
                  <Glyph size={18}><path d="M1 19L7 4l6 15M3 14h8M19 6v10M15 12l4 4 4-4" {...stroke} strokeWidth="2.600" /></Glyph>
                </FormatButton>
                <FormatButton aria-label="書式をクリア"><ClearFormat /></FormatButton>
                <Divider />
                <FormatButton aria-label="切り取り"><MdContentCut size={17} /></FormatButton>
              </FormatBar>
              <FormatScroll />
              <TextArea id="script" defaultValue={'まずFコードは一フレットにセーハを\nするので\n全体を半音上げます'} />
            </ScriptColumn>
            <SideButton>変</SideButton>
          </PropBody>
        </PropRow>
        <PropRow $height={74}>
          <PropLabel htmlFor="pron">発音</PropLabel>
          <PropBody>
            <TextArea
              id="pron"
              defaultValue={'まず/えふ/こーどわ/い_チふ\nれっとに/せーはを/するので/\nぜんたいを/はんおん/あげま_\nス'}
            />
            <SideButton aria-label="再生"><Glyph size={12}><path d="M4 3l16 9-16 9z" /></Glyph></SideButton>
            <SideButton aria-label="更新">
              <Glyph size={15}>
                <path d="M13 21a9 9 0 1 1 8-9" {...stroke} strokeWidth="2.400" />
                <path d="M16 12h9l-4.500 5z" />
              </Glyph>
            </SideButton>
          </PropBody>
        </PropRow>
        <PropRow>
          <span />
          <PropBody><SideButton $wide>抑揚を編集</SideButton></PropBody>
        </PropRow>
        <ValueRow label="音量" value="50.0" unit="%" pos={50} button />
        <ValueRow label="パン" size={11} value="0.0" pos={50} button />
        <ValueRow label="音程 / 再生速度" size={10} value="100.0" unit="%" pos={50} />
        <ValueRow label="読み上げ速度" size={11} value="150" unit="%" pos={66} />
        <SelectRow label="バージョン" size={11} value="v1.7" />
        <PropRow>
          <PropLabel htmlFor="start" $size={11}>再生開始位置</PropLabel>
          <PropBody>
            <TextField id="start" defaultValue="00:00:00.00" />
            <SideButton>時</SideButton>
          </PropBody>
        </PropRow>
        <ValueRow label="フェードイン" size={10} value="0.00" unit="秒" pos={0} />
        <ValueRow label="フェードアウト" size={10} value="0.00" unit="秒" pos={0} />
        <ExpanderRow title="エコー" open />
        <ToggleRow label="有効" />
        <ValueRow label="間隔" value="0.10" unit="秒" pos={20} />
        <ValueRow label="減衰" value="40.00" unit="%" pos={44} />
        <ExpanderRow title="音声エフェクト" />
        <ExpanderRow title="字幕" open />
        <SelectRow label="字幕の設定" size={11} value="個別に設定する" />
        <ValueRow label="X" value="-4.0" unit="px" pos={50} button />
        <ValueRow label="Y" value="1764.0" unit="px" pos={94} mult="x4" button />
        <ValueRow label="Z" value="0.0" unit="px" pos={50} button />
        <ValueRow label="不透明度" value="100.0" unit="%" pos={100} button />
        <ValueRow label="拡大率" value="100.0" unit="%" pos={25} button />
        <ValueRow label="回転角" value="0.0" unit="°" pos={50} button />
        <ValueRow label="フェードイン" size={10} value="0.00" unit="秒" pos={0} />
        <ValueRow label="フェードアウト" size={10} value="0.00" unit="秒" pos={0} />
        <SelectRow label="合成モード" size={11} value="通常" />
        <ToggleRow label="左右反転" second="クリッピング" secondSize={11} />
        <ToggleRow label="手前に表示" size={11} second="Z値順に表示" secondSize={11} />
      </Props>
      <VScroll>
        <Arrow />
        <VThumb $top={57} $size="56%" />
        <Spacer />
        <Arrow turn={180} />
      </VScroll>
    </Side>
  );
}

function App() {
  return (
    <>
      <GlobalStyle />
      <Window>
        <TitleBar>
          <svg width="17" height="17" viewBox="0 0 17 17">
            <circle cx="8.500" cy="8.500" r="8" fill="#111" />
            <text x="8.500" y="12.500" fontSize="11" fontWeight="700" fill="#fff" textAnchor="middle">ゆ</text>
          </svg>
          <AppTitle>ゆっくりMovieMaker v4.44.0.4</AppTitle>
          <WindowButton aria-label="最小化">
            <svg width="12" height="12" stroke="#111"><path d="M1 6.500h10" /></svg>
          </WindowButton>
          <WindowButton aria-label="元に戻す">
            <svg width="12" height="12" fill="none" stroke="#111">
              <rect x="1.500" y="3.500" width="7" height="7" rx="1.500" />
              <path d="M3.500 1.500h5q2 0 2 2v5" />
            </svg>
          </WindowButton>
          <WindowButton aria-label="閉じる">
            <svg width="12" height="12" stroke="#111"><path d="M1 1l10 10M11 1L1 11" /></svg>
          </WindowButton>
        </TitleBar>
        <MenuBar>
          {['ファイル(F)', '編集(E)', '表示(V)', 'ツール(T)', 'ヘルプ(H)'].map((m) => <MenuItem key={m}>{m}</MenuItem>)}
        </MenuBar>
        <Workspace>
          <Main>
            <Preview><EditorPicture /></Preview>
            <Transport>
              <TransportButton aria-label="一時停止"><PauseIcon /></TransportButton>
              <TransportButton aria-label="停止"><StopIcon /></TransportButton>
              <Select value="x 1.0" width={60} label="再生速度" />
              <TransportButton aria-label="ループ"><LoopIcon /></TransportButton>
              <TransportButton aria-label="軌跡"><PathIcon /></TransportButton>
              <TransportButton aria-label="先頭へ"><FirstIcon /></TransportButton>
              <TransportButton aria-label="前へ移動"><BackManyIcon /></TransportButton>
              <TransportButton aria-label="前のフレーム"><BackIcon /></TransportButton>
              <Range aria-label="再生位置" $grow min={0} max={11713} defaultValue={1476} />
              <TransportButton aria-label="次のフレーム"><NextIcon /></TransportButton>
              <TransportButton aria-label="次へ移動"><NextManyIcon /></TransportButton>
              <TransportButton aria-label="末尾へ"><LastIcon /></TransportButton>
              <Speaker><MdVolumeUp size={13} /></Speaker>
              <VolumeText>100.0 %</VolumeText>
              <Range aria-label="音量" $width={95} defaultValue={100} />
            </Transport>
            <HSplit />
            <TabBar>
              <Tab><Grip $faint />メイン</Tab>
              <TabIcon aria-label="タブを追加">+</TabIcon>
              <Spacer />
              <TabIcon aria-label="一覧">
                <svg width="8" height="8" stroke="#777"><path d="M0 1.500h8M0 3.500h8M0 5.500h8M0 7.500h8" /></svg>
              </TabIcon>
              <TabIcon aria-label="設定"><MdSettings size={10} /></TabIcon>
            </TabBar>
            <TimelinePanel />
          </Main>
          <VSplit />
          <PropertyPanel />
        </Workspace>
        <StatusBar>
          <StatusItem>{'00:00:24.60   /  00:03:15.21'}</StatusItem>
          <StatusItem>{' 1476   /  11713'}</StatusItem>
          <StatusItem>x0.18</StatusItem>
          <StatusItem>2160x3840 60fps 48000Hz</StatusItem>
          <StatusItem $last>無題*</StatusItem>
        </StatusBar>
      </Window>
    </>
  );
}

export default App;
